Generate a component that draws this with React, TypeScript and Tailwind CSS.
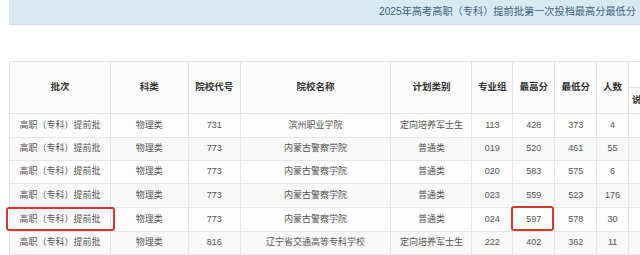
import React from "react";

// 2025 高职（专科）提前批 投档分数表
const HEADERS = ["批次", "科类", "院校代号", "院校名称", "计划类别", "专业组", "最高分", "最低分", "人数"];
const WIDTHS = ["w-[101px]", "w-[78px]", "w-[52px]", "w-[151px]", "w-[81px]", "w-[41px]", "w-[42px]", "w-[42px]", "w-[32px]"];

const ROWS = [
  ["高职（专科）提前批", "物理类", "731", "滨州职业学院", "定向培养军士生", "113", "428", "373", "4"],
  ["高职（专科）提前批", "物理类", "773", "内蒙古警察学院", "普通类", "019", "520", "461", "55"],
  ["高职（专科）提前批", "物理类", "773", "内蒙古警察学院", "普通类", "020", "583", "575", "6"],
  ["高职（专科）提前批", "物理类", "773", "内蒙古警察学院", "普通类", "023", "559", "523", "176"],
  ["高职（专科）提前批", "物理类", "773", "内蒙古警察学院", "普通类", "024", "597", "578", "30"],
  ["高职（专科）提前批", "物理类", "816", "辽宁省交通高等专科学校", "定向培养军士生", "222", "402", "362", "11"],
];

const ROW_H = ["h-[24px]", "h-[23px]", "h-[23px]", "h-[24px]", "h-[24px]", "h-[23px]"];

export default function App() {
  return (
    <div
      className="relative h-[255px] w-[640px] overflow-hidden bg-white"
      style={{ fontFamily: '"Liberation Sans", "Noto Sans CJK SC", sans-serif' }}
    >
      {/* 顶部标题条 */}
      <div className="ml-[9px] flex h-[25px] items-center justify-end border-b border-[#c9dde9] bg-[#d7e9f3] pr-[4px] text-[10.2px] text-[#3f6482]">
        2025年高考高职（专科）提前批第一次投档最高分最低分
      </div>

      <div className="ml-[9px] mt-[36px] w-[680px]">
        <table className="table-fixed border-collapse text-center">
          <colgroup>
            {WIDTHS.map((w, i) => (
              <col key={i} className={w} />
            ))}
            <col className="w-[60px]" />
          </colgroup>
          <thead>
            <tr className="h-[26px]">
              {HEADERS.map((h) => (
                <th
                  key={h}
                  rowSpan={2}
                  className="border border-[#e3e3e3] bg-[#fcfcfc] p-0 text-[9.5px] font-bold text-[#333]"
                >
                  {h}
                </th>
              ))}
              <th className="border border-[#e3e3e3] bg-white p-0" />
            </tr>
            <tr className="h-[26px]">
              <th className="border border-[#e3e3e3] bg-[#fcfcfc] p-0 pl-[3px] text-left text-[9.5px] font-bold text-[#333]">
                说明
              </th>
            </tr>
          </thead>
          <tbody>
            {ROWS.map((r, i) => (
              <tr key={i} className={`${ROW_H[i]} ${i % 2 === 1 ? "bg-[#f9f9f9]" : "bg-[#fdfdfd]"}`}>
                {r.map((c, j) => (
                  <td key={j} className="border border-[#e6e6e6] p-0 text-[9px] whitespace-nowrap text-[#555]">
                    {c}
                  </td>
                ))}
                <td className="border border-[#e6e6e6] p-0" />
              </tr>
            ))}
          </tbody>
        </table>
      </div>

      {/* 红框标注 */}
      <div className="absolute left-[6px] top-[207px] h-[24px] w-[109px] rounded-[3px] border-2 border-[#d9372c]" />
      <div className="absolute left-[511px] top-[206px] h-[25px] w-[43px] rounded-[3px] border-2 border-[#d9372c]" />
    </div>
  );
}
